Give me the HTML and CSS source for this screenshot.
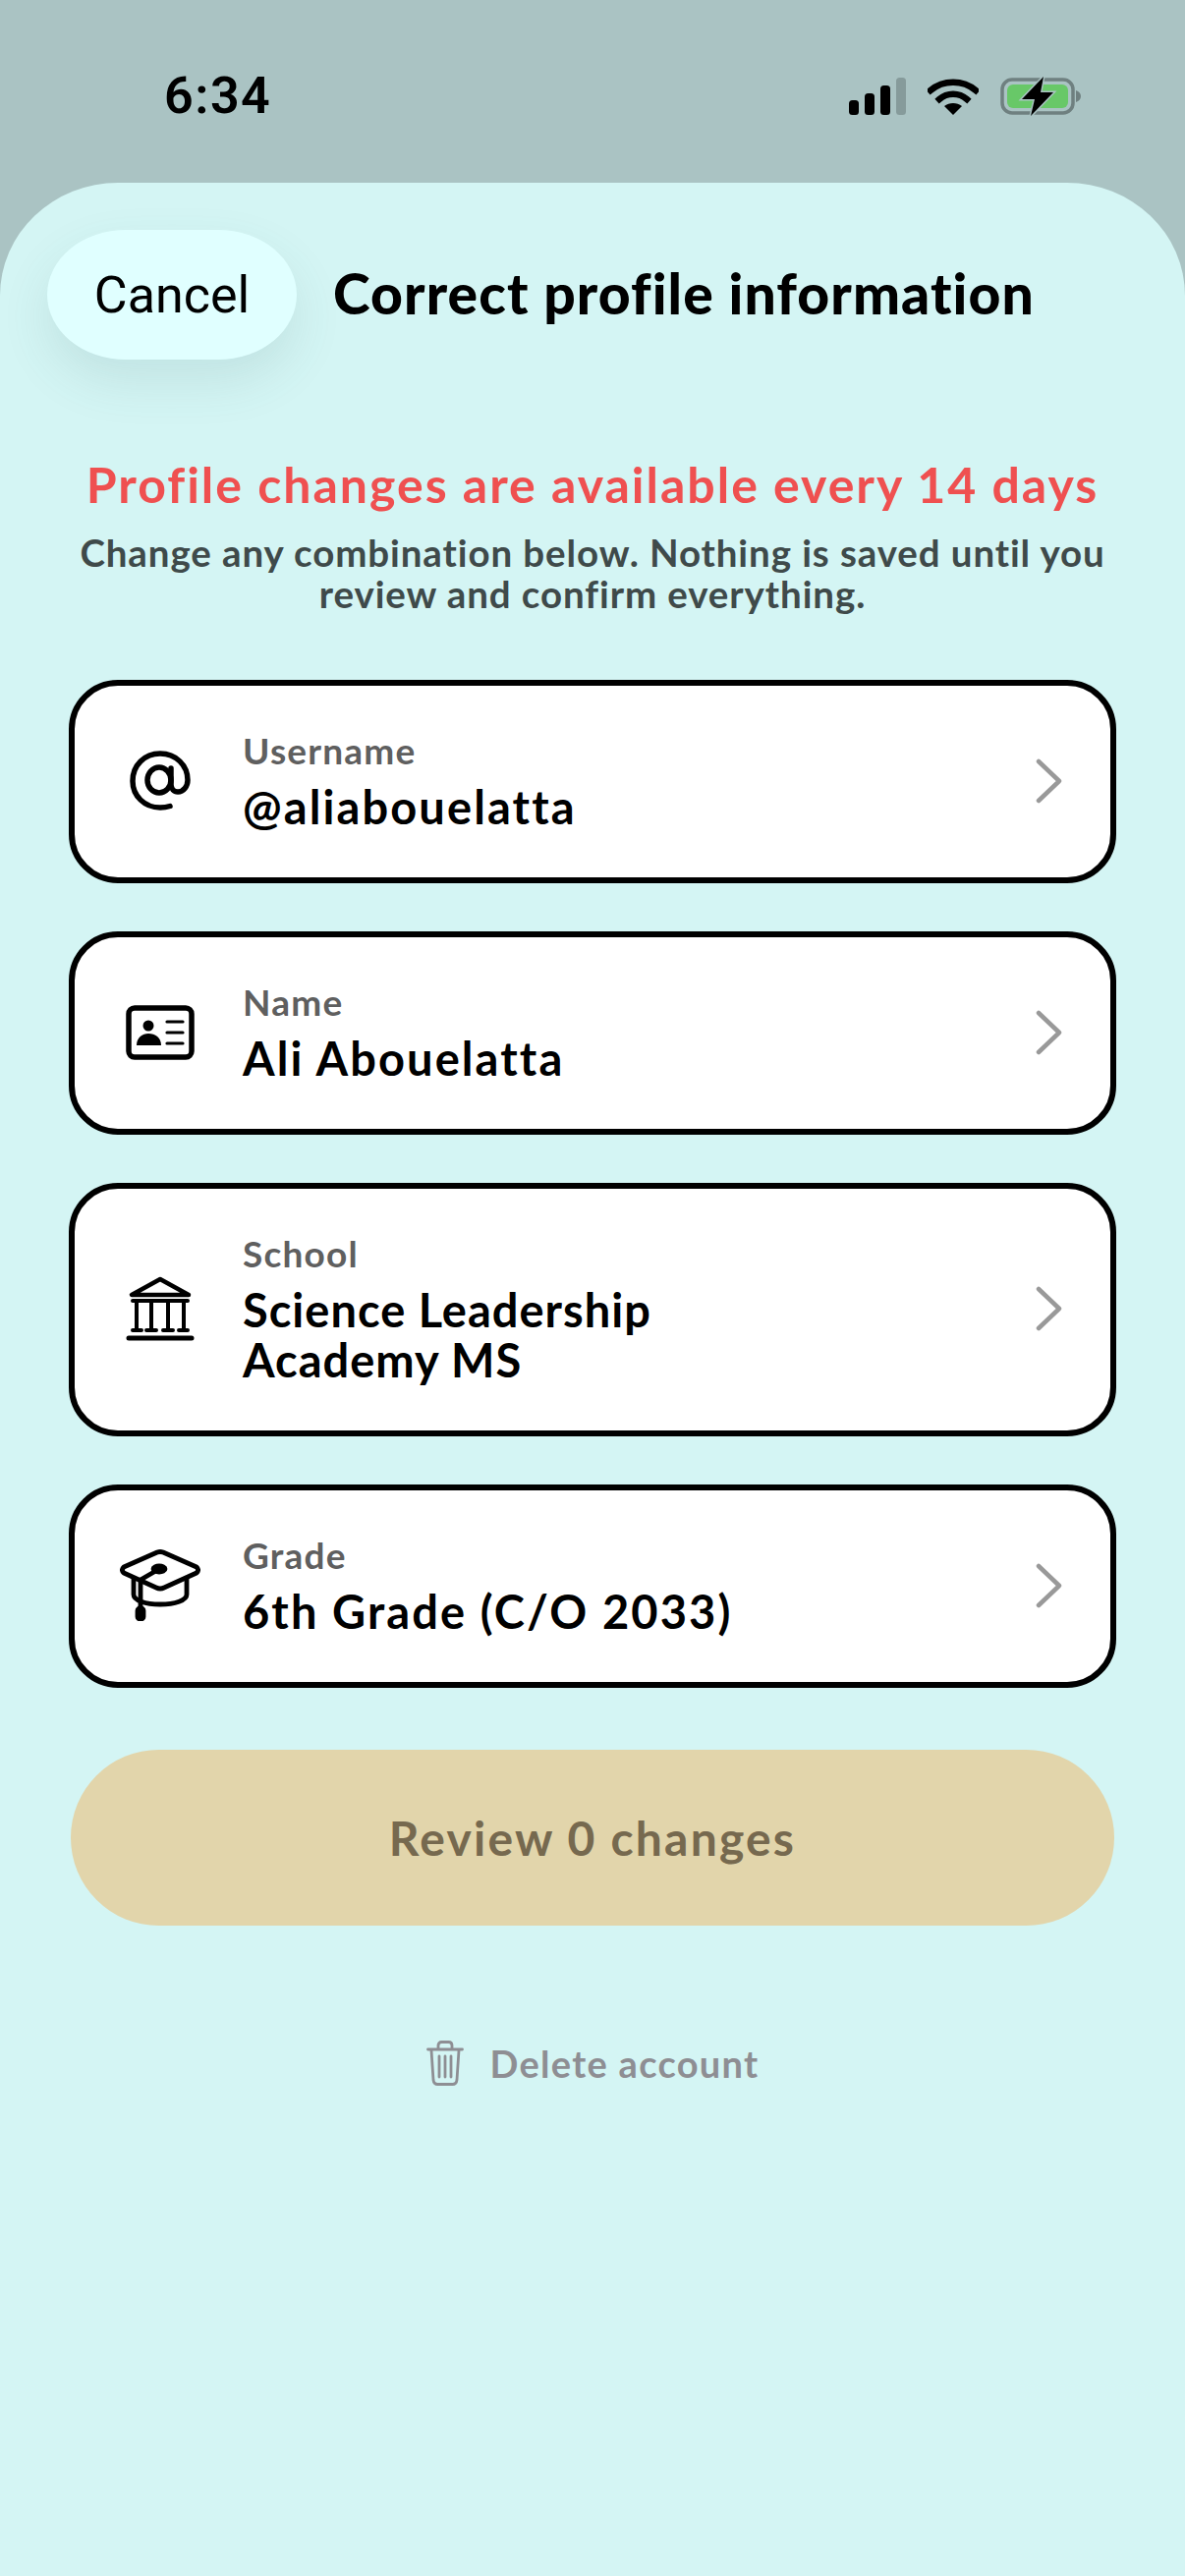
FILE: index.html
```html
<!DOCTYPE html>
<html lang="en">
<head>
  <meta charset="UTF-8">
  <meta name="viewport" content="width=device-width, initial-scale=1.0">
  <title>Correct profile information</title>
  <link rel="stylesheet" href="styles.css">
</head>
<body>
  <div class="status-bar">
    <span class="time">6:34</span>
    <div class="status-icons">
      <svg width="58" height="38" viewBox="0 0 58 38">
        <rect x="0" y="23" width="10" height="15" rx="3.5" fill="#000"/>
        <rect x="16" y="16" width="10" height="22" rx="3.5" fill="#000"/>
        <rect x="32" y="8" width="10" height="30" rx="3.5" fill="#000"/>
        <rect x="48" y="0" width="10" height="38" rx="3.5" fill="#869b9b"/>
      </svg>
      <svg width="52" height="38" viewBox="0 0 52 38">
        <path d="M3 13 C16 2 36 2 49 13" fill="none" stroke="#000" stroke-width="6.5" stroke-linecap="square"/>
        <path d="M12 22 C20 15 32 15 40 22" fill="none" stroke="#000" stroke-width="6.5" stroke-linecap="square"/>
        <path d="M17 29 C22 25 30 25 35 29 L26 38 Z" fill="#000"/>
      </svg>
      <svg width="82" height="40" viewBox="0 0 82 40">
        <rect x="2" y="3" width="72" height="34" rx="10" fill="none" stroke="#6f8080" stroke-width="3.5"/>
        <rect x="7" y="8" width="62" height="24" rx="6" fill="#68c868"/>
        <path d="M77 14 C80 15 82 17 82 20 C82 23 80 25 77 26 Z" fill="#6f8080"/>
        <path d="M44 0 L22 23 H35 L31 40 L54 16 H41 Z" fill="#000" stroke="#aac3c3" stroke-width="3" paint-order="stroke"/>
      </svg>
    </div>
  </div>

  <div class="sheet">
    <div class="sheet-header">
      <button class="cancel-btn" type="button">Cancel</button>
      <h1>Correct profile information</h1>
    </div>

    <div class="notice">
      <div class="notice-title">Profile changes are available every 14 days</div>
      <p>Change any combination below. Nothing is saved until you<br>review and confirm everything.</p>
    </div>

    <div class="fields">
      <div class="field">
        <div class="field-icon">
          <svg width="62" height="61" viewBox="0 0 62 61" fill="none" stroke="#000" stroke-width="5.5" stroke-linecap="round">
            <ellipse cx="30" cy="30" rx="12" ry="13"/>
            <path d="M42 18 V34 C42 39 45 42 49 42 C55 42 59 36 59 30 C59 15 47 3 31 3 C15 3 3 15 3 31 C3 46 15 58 31 58 C35 58 38 57.500 41 56.500"/>
          </svg>
        </div>
        <div class="field-text">
          <div class="field-label">Username</div>
          <div class="field-value">@aliabouelatta</div>
        </div>
        <svg class="chevron" width="28" height="46" viewBox="0 0 28 46" fill="none" stroke="#999" stroke-width="4.5" stroke-linecap="round" stroke-linejoin="round"><path d="M3 3 L24 23 L3 43"/></svg>
      </div>

      <div class="field">
        <div class="field-icon">
          <svg width="70" height="56" viewBox="0 0 70 56">
            <rect x="3" y="3" width="64" height="50" rx="6" fill="none" stroke="#000" stroke-width="5.5"/>
            <circle cx="23" cy="21" r="5.500" fill="#000"/>
            <path d="M11 41 C11 33 17 29 23 29 C30 29 36 33 36 41 Z" fill="#000"/>
            <path d="M42 17 H58 M42 28 H58 M42 39 H58" stroke="#000" stroke-width="3.200" stroke-linecap="round"/>
          </svg>
        </div>
        <div class="field-text">
          <div class="field-label">Name</div>
          <div class="field-value">Ali Abouelatta</div>
        </div>
        <svg class="chevron" width="28" height="46" viewBox="0 0 28 46" fill="none" stroke="#999" stroke-width="4.5" stroke-linecap="round" stroke-linejoin="round"><path d="M3 3 L24 23 L3 43"/></svg>
      </div>

      <div class="field">
        <div class="field-icon">
          <svg width="70" height="66" viewBox="0 0 70 66" fill="none" stroke="#000" stroke-linecap="round" stroke-linejoin="round">
            <path d="M35 3 L6 19 H64 Z" stroke-width="4.500"/>
            <path d="M7 25 H63 M11 27 V54 M26 27 V54 M43 27 V54 M59 27 V54 M7 55 H16 M21 55 H31 M38 55 H48 M54 55 H63" stroke-width="4"/>
            <path d="M3 63 H67" stroke-width="5"/>
          </svg>
        </div>
        <div class="field-text">
          <div class="field-label">School</div>
          <div class="field-value field-value-tight">Science Leadership<br>Academy MS</div>
        </div>
        <svg class="chevron" width="28" height="46" viewBox="0 0 28 46" fill="none" stroke="#999" stroke-width="4.5" stroke-linecap="round" stroke-linejoin="round"><path d="M3 3 L24 23 L3 43"/></svg>
      </div>

      <div class="field">
        <div class="field-icon">
          <svg width="82" height="73" viewBox="0 0 82 73" fill="none" stroke="#000" stroke-width="4.800" stroke-linecap="round" stroke-linejoin="round">
            <path d="M38 3 Q41 2 44 3 L78 18 Q81 21 78 24 L45 39 Q41 41 37 39 L4 24 Q1 21 4 18 Z"/>
            <path d="M14 30 V46 C14 52 26 56 41 56 C56 56 68 52 68 46 V30"/>
            <path d="M40 20 L21 31 V60"/>
            <ellipse cx="40" cy="20" rx="6" ry="3" fill="#000"/>
            <rect x="18" y="60" width="6" height="11" rx="2.500" fill="#000"/>
          </svg>
        </div>
        <div class="field-text">
          <div class="field-label">Grade</div>
          <div class="field-value">6th Grade (C/O 2033)</div>
        </div>
        <svg class="chevron" width="28" height="46" viewBox="0 0 28 46" fill="none" stroke="#999" stroke-width="4.5" stroke-linecap="round" stroke-linejoin="round"><path d="M3 3 L24 23 L3 43"/></svg>
      </div>
    </div>

    <button class="review-btn" type="button">Review 0 changes</button>

    <div class="delete-row">
      <svg width="38" height="46" viewBox="0 0 38 46" fill="none" stroke="#8e8e93" stroke-width="2.800" stroke-linecap="round" stroke-linejoin="round">
        <path d="M1.500 9 H36.500 M12 8 V5 Q12 1.500 15.500 1.500 H22.500 Q26 1.500 26 5 V8"/>
        <path d="M5 10 L7 40 Q7.500 44.500 11.500 44.500 H26.500 Q30.500 44.500 31 40 L33 10"/>
        <path d="M13 16 V37 M19 16 V37 M25 16 V37"/>
      </svg>
      <span>Delete account</span>
    </div>
  </div>
</body>
</html>
```

FILE: styles.css
```css
* {
  box-sizing: border-box;
}
html, body {
  margin: 0;
  padding: 0;
}
body {
  width: 1206px;
  height: 2622px;
  overflow: hidden;
  background: #aac3c3;
  font-family: "Lato", "Noto Sans", sans-serif;
  color: #000;
}
.status-bar {
  height: 186px;
  padding: 70px 106px 0 167px;
  display: flex;
  justify-content: space-between;
  align-items: flex-start;
}
.time {
  font-family: "Roboto", sans-serif;
  font-weight: 600;
  font-size: 52px;
  line-height: 56px;
  letter-spacing: 1.5px;
}
.status-icons {
  display: flex;
  align-items: center;
  gap: 22px;
  margin-top: 8px;
}
.sheet {
  height: 2436px;
  background: #d4f5f4;
  border-radius: 120px 120px 0 0 / 115px 115px 0 0;
  padding-top: 48px;
}
.sheet-header {
  display: flex;
  align-items: center;
  gap: 37px;
  padding-left: 48px;
}
.cancel-btn {
  width: 254px;
  height: 132px;
  border: none;
  border-radius: 80px / 66px;
  background: #e0ffff;
  box-shadow: 0 22px 50px rgba(60, 110, 110, 0.12);
  font-family: "Roboto", sans-serif;
  font-size: 52px;
  color: #000;
  padding: 0;
}
h1 {
  margin: 0 0 4px;
  font-size: 57px;
  font-weight: 900;
  line-height: 70px;
  letter-spacing: 1.1px;
}
.notice {
  margin-top: 95px;
  text-align: center;
}
.notice-title {
  font-size: 50px;
  line-height: 64px;
  font-weight: 700;
  color: #ef5050;
  letter-spacing: 2px;
}
.notice p {
  margin: 16px 0 0;
  font-size: 38.5px;
  line-height: 42px;
  font-weight: 700;
  color: #3f4a4a;
  letter-spacing: 0.9px;
}
.fields {
  margin: 67px 70px 0;
  display: flex;
  flex-direction: column;
  gap: 49px;
}
.field {
  padding: 44px 48px 46px 46px;
  background: #fff;
  border: 6px solid #000;
  border-radius: 50px;
  display: flex;
  align-items: center;
}
.field-icon {
  width: 82px;
  margin-right: 43px;
  display: flex;
  justify-content: center;
}
.field-text {
  flex: 1;
}
.field-label {
  font-size: 37px;
  line-height: 44px;
  font-weight: 700;
  color: #5f5f5f;
  letter-spacing: 1.2px;
}
.field-value {
  margin-top: 10px;
  font-size: 47px;
  line-height: 51px;
  font-weight: 700;
  letter-spacing: 2.1px;
}
.field-value-tight {
  letter-spacing: 1px;
}
.review-btn {
  display: block;
  width: 1062px;
  height: 179px;
  margin: 63px 72px 0;
  border: none;
  border-radius: 90px;
  background: #e2d5ab;
  font-family: inherit;
  font-size: 48px;
  font-weight: 700;
  color: #76694f;
  letter-spacing: 2.2px;
}
.delete-row {
  margin-top: 117px;
  display: flex;
  justify-content: center;
  align-items: center;
  gap: 27px;
  font-size: 38px;
  font-weight: 700;
  color: #8e8e93;
  letter-spacing: 1.3px;
}
```
